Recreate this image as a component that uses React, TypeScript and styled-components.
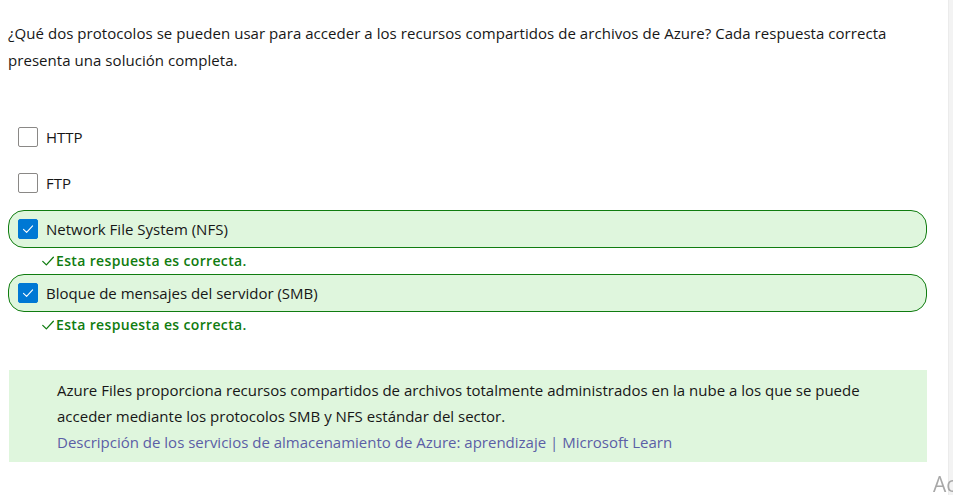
import React from "react";
import styled, { createGlobalStyle } from "styled-components";

const Global = createGlobalStyle`
  html, body { margin: 0; padding: 0; background: #ffffff; }
  body { font-family: "Segoe UI", "Open Sans", "Noto Sans", sans-serif; color: #171717; }
  * { box-sizing: border-box; }
`;

const Page = styled.div`
  display: flex;
  width: 953px;
  height: 495px;
  overflow: hidden;
`;

const Main = styled.main`
  flex: 1;
  padding: 20px 21px 0 8px;
`;

const Gutter = styled.div`
  width: 5px;
  background: #f3f3f3;
  border-left: 1px solid #ebebeb;
`;

const Question = styled.p`
  margin: 0 0 44px;
  font-size: 15px;
  line-height: 27px;
  letter-spacing: 0.05px;
`;

const List = styled.div`
  display: flex;
  flex-direction: column;
`;

const Row = styled.label<{ $correct?: boolean }>`
  display: flex;
  align-items: center;
  gap: 8px;
  height: 38px;
  padding-left: 9px;
  border: 1px solid ${(p) => (p.$correct ? "#107c10" : "transparent")};
  border-radius: 16px;
  background: ${(p) => (p.$correct ? "#dff6dd" : "transparent")};
  font-size: 15px;
  margin-bottom: ${(p) => (p.$correct ? "0" : "8px")};
`;

const Box = styled.span<{ $checked?: boolean }>`
  width: 20px;
  height: 20px;
  flex: none;
  border-radius: 2px;
  border: 1px solid ${(p) => (p.$checked ? "#0078d4" : "#8a8886")};
  background: ${(p) => (p.$checked ? "#0078d4" : "#fff")};
  display: flex;
  align-items: center;
  justify-content: center;
`;

const Feedback = styled.div`
  display: flex;
  align-items: center;
  gap: 1px;
  padding: 3px 0 3px 33px;
  line-height: 20px;
  font-size: 14px;
  letter-spacing: 0.35px;
  font-weight: 600;
  color: #107c10;
`;

const Explanation = styled.div`
  margin: 32px 0 0 1px;
  background: #dff6dd;
  padding: 7px 20px 7px 48px;
  font-size: 15px;
  line-height: 26px;
`;

const Link = styled.a`
  color: #5b5ea6;
  text-decoration: none;
`;

const Watermark = styled.div`
  position: fixed;
  left: 933px;
  top: 470px;
  font-size: 21px;
  color: #a8a8a8;
  font-family: "Segoe UI", "Open Sans", sans-serif;
  white-space: nowrap;
`;

const Check = ({ color = "#fff", size = 12 }: { color?: string; size?: number }) => (
  <svg width={size} height={size} viewBox="0 0 12 12" fill="none">
    <path d="M1.5 6.3 L4.6 9.3 L10.6 2.8" stroke={color} strokeWidth="1.1" strokeLinecap="round" strokeLinejoin="round" />
  </svg>
);

const options = [
  { text: "HTTP", correct: false },
  { text: "FTP", correct: false },
  { text: "Network File System (NFS)", correct: true },
  { text: "Bloque de mensajes del servidor (SMB)", correct: true },
];

export default function App() {
  return (
    <>
      <Global />
      <Page>
        <Main>
          <Question>
            ¿Qué dos protocolos se pueden usar para acceder a los recursos compartidos de archivos de Azure? Cada respuesta correcta presenta una solución completa.
          </Question>
          <List>
            {options.map((o) => (
              <React.Fragment key={o.text}>
                <Row $correct={o.correct}>
                  <Box $checked={o.correct}>{o.correct && <Check />}</Box>
                  {o.text}
                </Row>
                {o.correct && (
                  <Feedback>
                    <Check color="#107c10" size={14} />
                    Esta respuesta es correcta.
                  </Feedback>
                )}
              </React.Fragment>
            ))}
          </List>
          <Explanation>
            Azure Files proporciona recursos compartidos de archivos totalmente administrados en la nube a los que se puede acceder mediante los protocolos SMB y NFS estándar del sector.
            <br />
            <Link href="#">Descripción de los servicios de almacenamiento de Azure: aprendizaje | Microsoft Learn</Link>
          </Explanation>
        </Main>
        <Gutter />
      </Page>
      <Watermark>Ac</Watermark>
    </>
  );
}
